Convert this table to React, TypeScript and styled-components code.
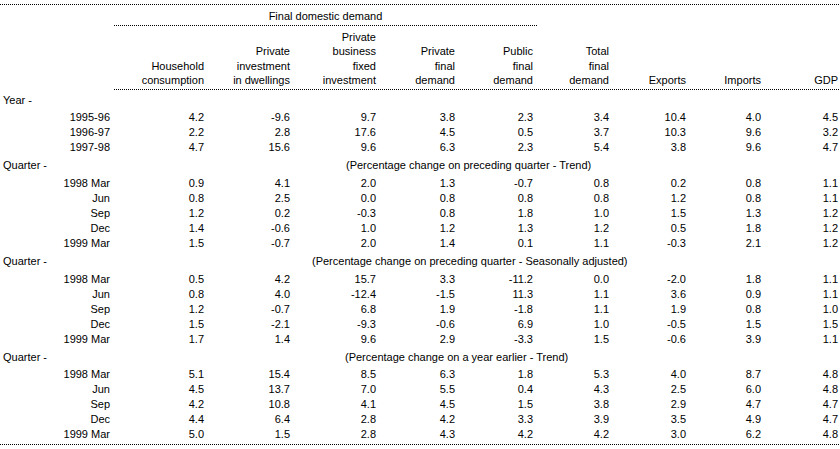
import styled, { createGlobalStyle, css } from "styled-components";

const GlobalStyle = createGlobalStyle`
  html, body {
    margin: 0;
    padding: 0;
    background: #ffffff;
  }
  body {
    font-family: "Liberation Sans", Arial, sans-serif;
    font-size: 11px;
    color: #000000;
  }
`;

const COLUMNS = "110px 94px 86px 86px 79px 78px 76px 77px 75px 77px";

const dots = css`
  background-image: repeating-linear-gradient(
    to right,
    #000000 0,
    #000000 1px,
    transparent 1px,
    transparent 2px
  );
`;

const Sheet = styled.div`
  display: flex;
  flex-direction: column;
  width: 840px;
  height: 449px;
  overflow: hidden;
`;

const Rule = styled.div<{ $inset?: number; $gap?: number }>`
  flex: none;
  height: 1px;
  margin-left: ${(p) => p.$inset ?? 0}px;
  margin-top: ${(p) => p.$gap ?? 0}px;
  ${dots}
`;

const GroupRow = styled.div`
  display: grid;
  grid-template-columns: ${COLUMNS};
`;

const GroupCell = styled.div`
  grid-column: 2 / 7;
  margin-left: 4px;
  margin-right: -4px;
  padding: 4px 0 2px;
  line-height: 14px;
  text-align: center;
`;

const GroupRule = styled(Rule)`
  grid-column: 2 / 7;
  margin-left: 4px;
  margin-right: -4px;
`;

const HeaderRow = styled.div`
  display: grid;
  grid-template-columns: ${COLUMNS};
  align-items: end;
  padding: 3.5px 0 1px;
`;

const HeaderCell = styled.div`
  text-align: right;
  line-height: 14.5px;
`;

const SectionRow = styled.div`
  display: flex;
  height: 20.7px;
  line-height: 20.7px;
  white-space: nowrap;
`;

const SectionLabel = styled.div`
  width: 110px;
  padding-left: 3px;
  box-sizing: border-box;
`;

const Note = styled.div<{ $at: number }>`
  margin-left: ${(p) => p.$at - 110}px;
`;

const DataRow = styled.div`
  display: grid;
  grid-template-columns: ${COLUMNS};
  height: 15px;
  line-height: 15px;
`;

const Cell = styled.div`
  text-align: right;
  white-space: nowrap;
`;

const headers: string[][] = [
  ["Household", "consumption"],
  ["Private", "investment", "in dwellings"],
  ["Private", "business", "fixed", "investment"],
  ["Private", "final", "demand"],
  ["Public", "final", "demand"],
  ["Total", "final", "demand"],
  ["Exports"],
  ["Imports"],
  ["GDP"],
];

type Section = {
  label: string;
  note?: string;
  at?: number;
  rows: [string, string[]][];
};

const sections: Section[] = [
  {
    label: "Year -",
    rows: [
      ["1995-96", ["4.2", "-9.6", "9.7", "3.8", "2.3", "3.4", "10.4", "4.0", "4.5"]],
      ["1996-97", ["2.2", "2.8", "17.6", "4.5", "0.5", "3.7", "10.3", "9.6", "3.2"]],
      ["1997-98", ["4.7", "15.6", "9.6", "6.3", "2.3", "5.4", "3.8", "9.6", "4.7"]],
    ],
  },
  {
    label: "Quarter -",
    note: "(Percentage change on preceding quarter - Trend)",
    at: 346,
    rows: [
      ["1998 Mar", ["0.9", "4.1", "2.0", "1.3", "-0.7", "0.8", "0.2", "0.8", "1.1"]],
      ["Jun", ["0.8", "2.5", "0.0", "0.8", "0.8", "0.8", "1.2", "0.8", "1.1"]],
      ["Sep", ["1.2", "0.2", "-0.3", "0.8", "1.8", "1.0", "1.5", "1.3", "1.2"]],
      ["Dec", ["1.4", "-0.6", "1.0", "1.2", "1.3", "1.2", "0.5", "1.8", "1.2"]],
      ["1999 Mar", ["1.5", "-0.7", "2.0", "1.4", "0.1", "1.1", "-0.3", "2.1", "1.2"]],
    ],
  },
  {
    label: "Quarter -",
    note: "(Percentage change on preceding quarter - Seasonally adjusted)",
    at: 312,
    rows: [
      ["1998 Mar", ["0.5", "4.2", "15.7", "3.3", "-11.2", "0.0", "-2.0", "1.8", "1.1"]],
      ["Jun", ["0.8", "4.0", "-12.4", "-1.5", "11.3", "1.1", "3.6", "0.9", "1.1"]],
      ["Sep", ["1.2", "-0.7", "6.8", "1.9", "-1.8", "1.1", "1.9", "0.8", "1.0"]],
      ["Dec", ["1.5", "-2.1", "-9.3", "-0.6", "6.9", "1.0", "-0.5", "1.5", "1.5"]],
      ["1999 Mar", ["1.7", "1.4", "9.6", "2.9", "-3.3", "1.5", "-0.6", "3.9", "1.1"]],
    ],
  },
  {
    label: "Quarter -",
    note: "(Percentage change on a year earlier - Trend)",
    at: 345,
    rows: [
      ["1998 Mar", ["5.1", "15.4", "8.5", "6.3", "1.8", "5.3", "4.0", "8.7", "4.8"]],
      ["Jun", ["4.5", "13.7", "7.0", "5.5", "0.4", "4.3", "2.5", "6.0", "4.8"]],
      ["Sep", ["4.2", "10.8", "4.1", "4.5", "1.5", "3.8", "2.9", "4.7", "4.7"]],
      ["Dec", ["4.4", "6.4", "2.8", "4.2", "3.3", "3.9", "3.5", "4.9", "4.7"]],
      ["1999 Mar", ["5.0", "1.5", "2.8", "4.3", "4.2", "4.2", "3.0", "6.2", "4.8"]],
    ],
  },
];

export default function App() {
  return (
    <>
      <GlobalStyle />
      <Sheet>
        <Rule $gap={4} />
        <GroupRow>
          <GroupCell>Final domestic demand</GroupCell>
          <GroupRule />
        </GroupRow>
        <HeaderRow>
          <div />
          {headers.map((lines, i) => (
            <HeaderCell key={i}>
              {lines.map((line, j) => (
                <div key={j}>{line}</div>
              ))}
            </HeaderCell>
          ))}
        </HeaderRow>
        <Rule $inset={114} />
        {sections.map((section, s) => (
          <div key={s}>
            <SectionRow>
              <SectionLabel>{section.label}</SectionLabel>
              {section.note && <Note $at={section.at ?? 110}>{section.note}</Note>}
            </SectionRow>
            {section.rows.map(([label, values]) => (
              <DataRow key={label}>
                <Cell>{label}</Cell>
                {values.map((v, k) => (
                  <Cell key={k}>{v}</Cell>
                ))}
              </DataRow>
            ))}
          </div>
        ))}
        <Rule $gap={1.5} />
      </Sheet>
    </>
  );
}
